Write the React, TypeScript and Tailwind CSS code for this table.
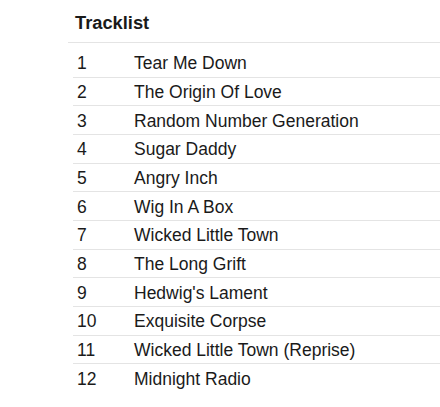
import React from "react";

const tracks = [
  "Tear Me Down",
  "The Origin Of Love",
  "Random Number Generation",
  "Sugar Daddy",
  "Angry Inch",
  "Wig In A Box",
  "Wicked Little Town",
  "The Long Grift",
  "Hedwig's Lament",
  "Exquisite Corpse",
  "Wicked Little Town (Reprise)",
  "Midnight Radio",
];

export default function App() {
  return (
    <div className="h-[407px] w-[440px] overflow-hidden bg-white pl-[68px] font-['Liberation_Sans',Arial,sans-serif] text-[#1a1a1a]">
      <h2 className="border-b border-[#e4e4e4] pb-[9px] pl-[7px] pt-[12px] text-[18.3px] font-bold leading-[21px]">
        Tracklist
      </h2>
      <div className="ml-[5px] mt-[6px] w-[400px]">
        {tracks.map((t, i) => (
          <div
            key={i}
            className={
              "flex h-[28.67px] items-center pt-[1px] text-[17.5px] leading-[20px] " +
              (i < tracks.length - 1 ? "border-b border-[#e4e4e4]" : "")
            }
          >
            <span className="w-[61px] pl-[4px]">{i + 1}</span>
            <span>{t}</span>
          </div>
        ))}
      </div>
    </div>
  );
}
